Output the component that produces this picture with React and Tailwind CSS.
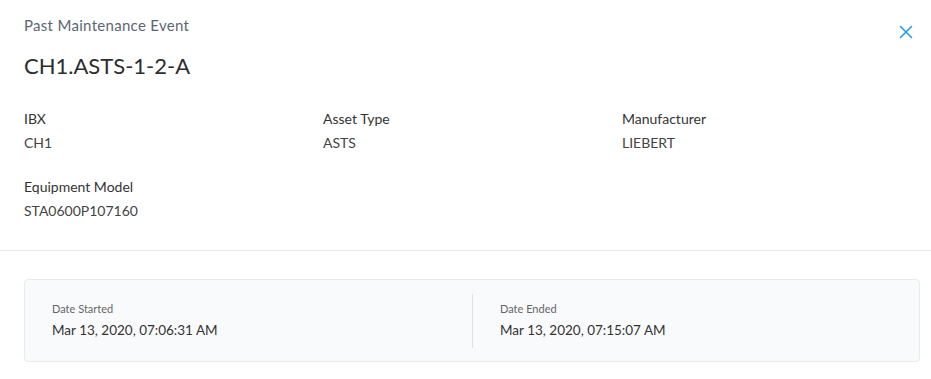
import { X } from 'lucide-react'

const DETAILS = [
  { label: 'IBX', value: 'CH1' },
  { label: 'Asset Type', value: 'ASTS' },
  { label: 'Manufacturer', value: 'LIEBERT' },
  { label: 'Equipment Model', value: 'STA0600P107160' },
]

const DATES = [
  { label: 'Date Started', value: 'Mar 13, 2020, 07:06:31 AM' },
  { label: 'Date Ended', value: 'Mar 13, 2020, 07:15:07 AM' },
]

export default function App() {
  return (
    <div className="w-[931px] h-[379px] bg-white font-['Lato','Liberation_Sans',sans-serif] text-[#333]">
      <div className="relative pl-6 pr-[11px] pt-[15px] pb-[29px] border-b border-[#e6e8eb]">
        <p className="text-[15px] leading-5 tracking-[0.3px] text-[#5b6675]">Past Maintenance Event</p>
        <h1 className="mt-[17px] text-[22px] leading-7 text-[#2d2d2d]">CH1.ASTS-1-2-A</h1>
        <button className="absolute right-[14px] top-[21px] text-[#1a9bf0]">
          <X size={22} strokeWidth={1.6} />
        </button>

        <div className="mt-[29px] grid grid-cols-[299px_299px_1fr] gap-y-[24px]">
          {DETAILS.map(d => (
            <div key={d.label}>
              <p className="text-[14px] leading-5 text-[#333]">{d.label}</p>
              <p className="mt-[4px] text-[14px] leading-5 text-[#444]">{d.value}</p>
            </div>
          ))}
        </div>
      </div>

      <div className="pl-6 pr-[11px] pt-7">
        <div className="flex items-stretch h-[83px] bg-[#f9fafb] border border-[#e9eaec] rounded">
          {DATES.map((d, i) => (
            <div key={d.label} className="flex-1 flex items-center">
              {i > 0 && <div className="w-px h-[54px] bg-[#dde1e6]" />}
              <div className="pl-[27px]">
                <p className="text-[11px] leading-4 text-[#666]">{d.label}</p>
                <p className="mt-[3px] text-[13.5px] leading-5 text-[#333]">{d.value}</p>
              </div>
            </div>
          ))}
        </div>
      </div>
    </div>
  )
}
